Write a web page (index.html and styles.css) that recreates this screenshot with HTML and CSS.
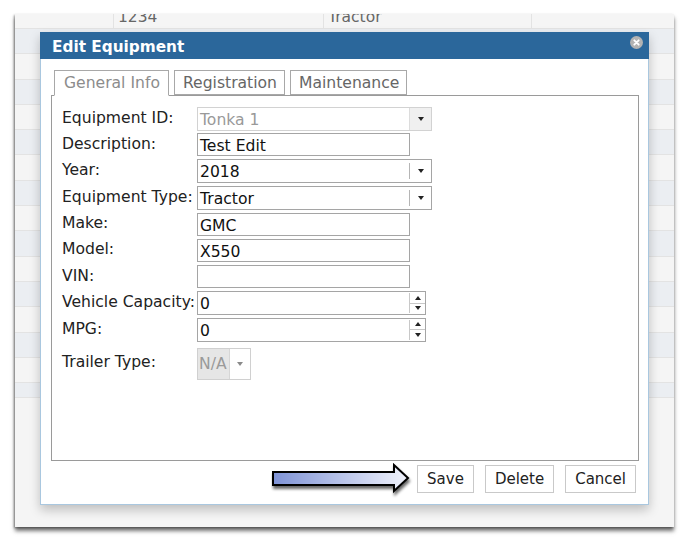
FILE: index.html
```html
<!DOCTYPE html>
<html>
<head>
<meta charset="utf-8">
<link rel="stylesheet" href="styles.css">
</head>
<body>
<div class="panel">
  <div class="grid-row first">
    <div class="cell c0"></div>
    <div class="cell c1">1234</div>
    <div class="cell c2">Tractor</div>
    <div class="cell c3"></div>
  </div>
  <div class="grid-row alt"></div>
  <div class="grid-row"></div>
  <div class="grid-row alt"></div>
  <div class="grid-row"></div>
  <div class="grid-row alt"></div>
  <div class="grid-row"></div>
  <div class="grid-row alt"></div>
  <div class="grid-row"></div>
  <div class="grid-row alt"></div>
  <div class="grid-row"></div>
  <div class="grid-row alt"></div>
  <div class="grid-row"></div>
  <div class="grid-row alt"></div>
  <div class="grid-row"></div>
  <div class="grid-row alt last"></div>
</div>

<div class="dialog">
  <div class="titlebar">
    <span class="title">Edit Equipment</span>
    <span class="close">
      <svg width="13" height="13" viewBox="0 0 13 13"><circle cx="6.5" cy="6.5" r="6.5" fill="#b3b3b3"/><path d="M4.3 4.3 L8.7 8.7 M8.7 4.3 L4.3 8.7" stroke="#fff" stroke-width="1.8" stroke-linecap="round"/></svg>
    </span>
  </div>
  <div class="dialog-body">
    <div class="tabs">
      <div class="tab active">General Info</div>
      <div class="tab">Registration</div>
      <div class="tab">Maintenance</div>
    </div>
    <div class="tab-content">
      <div class="row">
        <label class="lbl">Equipment ID:</label>
        <div class="select disabled"><span class="val">Tonka 1</span><span class="drop"><i class="caret"></i></span></div>
      </div>
      <div class="row">
        <label class="lbl">Description:</label>
        <div class="input"><span class="val">Test Edit</span></div>
      </div>
      <div class="row">
        <label class="lbl">Year:</label>
        <div class="select"><span class="val">2018</span><span class="drop"><i class="caret"></i></span></div>
      </div>
      <div class="row">
        <label class="lbl">Equipment Type:</label>
        <div class="select"><span class="val">Tractor</span><span class="drop"><i class="caret"></i></span></div>
      </div>
      <div class="row">
        <label class="lbl">Make:</label>
        <div class="input"><span class="val">GMC</span></div>
      </div>
      <div class="row">
        <label class="lbl">Model:</label>
        <div class="input"><span class="val">X550</span></div>
      </div>
      <div class="row">
        <label class="lbl">VIN:</label>
        <div class="input"><span class="val"></span></div>
      </div>
      <div class="row">
        <label class="lbl">Vehicle Capacity:</label>
        <div class="number"><span class="val">0</span><span class="spin"><i class="up"></i><i class="down"></i></span></div>
      </div>
      <div class="row">
        <label class="lbl">MPG:</label>
        <div class="number"><span class="val">0</span><span class="spin"><i class="up"></i><i class="down"></i></span></div>
      </div>
      <div class="row tall">
        <label class="lbl">Trailer Type:</label>
        <div class="mini-select"><span class="val">N/A</span><span class="drop"><i class="caret light"></i></span></div>
      </div>
    </div>
    <div class="buttons">
      <button class="btn">Save</button>
      <button class="btn">Delete</button>
      <button class="btn">Cancel</button>
    </div>
  </div>
</div>

<svg class="arrow" width="146" height="40" viewBox="0 0 146 40">
  <defs>
    <linearGradient id="ag" x1="0" y1="0" x2="1" y2="0">
      <stop offset="0" stop-color="#7f93d6"/>
      <stop offset="1" stop-color="#f0f2fb"/>
    </linearGradient>
    <filter id="sh" x="-10%" y="-30%" width="130%" height="180%">
      <feGaussianBlur in="SourceAlpha" stdDeviation="1.6"/>
      <feOffset dx="1" dy="3" result="b"/>
      <feComponentTransfer><feFuncA type="linear" slope="0.6"/></feComponentTransfer>
      <feMerge><feMergeNode/><feMergeNode in="SourceGraphic"/></feMerge>
    </filter>
  </defs>
  <path d="M2 9 H123 V2 L137 15 L123 28 V22 H2 Z" fill="url(#ag)" stroke="#000" stroke-width="2" stroke-linejoin="miter" filter="url(#sh)"/>
</svg>
</body>
</html>
```

FILE: styles.css
```css
html, body {
  margin: 0;
  padding: 0;
  background: #fff;
}
body {
  width: 686px;
  height: 542px;
  position: relative;
  overflow: hidden;
  font-family: "DejaVu Sans", Verdana, sans-serif;
}

.panel {
  margin: 14px 0 0 15px;
  width: 659px;
  height: 513px;
  background: #f5f5f5;
  box-shadow: 0 4px 4px rgba(0, 0, 0, 0.55), -1px 1px 2px rgba(0, 0, 0, 0.35);
  display: flex;
  flex-direction: column;
}
.grid-row {
  height: 25.3px;
  flex: none;
  box-sizing: border-box;
  border-bottom: 1px solid #e3e3e3;
  background: #f5f5f5;
}
.grid-row.alt {
  background: #ebeef2;
}
.grid-row.last {
  height: 15px;
}
.grid-row.first {
  height: 15px;
  display: flex;
  overflow: hidden;
}
.cell {
  box-sizing: border-box;
  border-right: 1px solid #e3e3e3;
  font-size: 15.5px;
  color: #666;
  line-height: 15px;
  padding-left: 4px;
  margin-top: -4px;
  height: 19px;
}
.c0 { width: 99px; }
.c1 { width: 210px; }
.c2 { width: 208px; }
.c3 { flex: 1; border-right: 0; }

.dialog {
  position: absolute;
  left: 40px;
  top: 32px;
  width: 609px;
  height: 473px;
  box-sizing: border-box;
  background: #fff;
  border: 1px solid #a9c7df;
  border-top: 0;
  box-shadow: 0 5px 10px rgba(0, 0, 0, 0.22);
  display: flex;
  flex-direction: column;
}
.titlebar {
  height: 27px;
  margin: 0 -1px;
  background: #2b679b;
  display: flex;
  align-items: center;
  justify-content: space-between;
  padding: 0 6px 0 12px;
  flex: none;
}
.title {
  color: #fff;
  font-weight: bold;
  font-size: 15.3px;
  margin-top: 3px;
}
.close {
  display: flex;
  align-self: flex-start;
  margin-top: 4px;
}

.dialog-body {
  padding: 11px 9px 0 10px;
  display: flex;
  flex-direction: column;
  flex: 1;
}
.tabs {
  display: flex;
  gap: 5px;
  padding-left: 3px;
  margin-bottom: -1px;
  position: relative;
  z-index: 1;
}
.tab {
  height: 25px;
  box-sizing: border-box;
  border: 1px solid #a8a8a8;
  background: #fff;
  font-size: 15.6px;
  color: #666;
  padding: 0 7px 0 8px;
  line-height: 25px;
}
.tab.active {
  color: #8c8c8c;
  height: 26px;
  border-bottom-color: #fff;
  padding: 0 8px 0 9px;
}
.tab-content {
  height: 366px;
  box-sizing: border-box;
  border: 1px solid #9a9a9a;
  padding: 11px 0 0 10px;
  display: flex;
  flex-direction: column;
  gap: 3.4px;
}
.row {
  display: flex;
  align-items: center;
  height: 23px;
}
.row.tall {
  height: 32px;
  margin-top: 3px;
}
.lbl {
  width: 135px;
  flex: none;
  font-size: 15.6px;
  color: #222;
  margin-top: -2px;
  white-space: nowrap;
}
.row.tall .lbl {
  margin-top: -4px;
}
.val {
  font-size: 15.6px;
  color: #111;
  padding-left: 2px;
  line-height: 21px;
  flex: 1;
  white-space: nowrap;
  margin-top: 2px;
}
.input {
  width: 213px;
  height: 23px;
  box-sizing: border-box;
  border: 1px solid #a5a5a5;
  display: flex;
}
.select {
  width: 235px;
  height: 24px;
  box-sizing: border-box;
  border: 1px solid #a5a5a5;
  display: flex;
  background: #fff;
}
.select .drop {
  width: 21px;
  flex: none;
  border-left: 1px solid #b5b5b5;
  margin: 3px 0;
  display: flex;
  align-items: center;
  justify-content: center;
}
.select.disabled {
  border-color: #d2d2d2;
}
.select.disabled .val {
  color: #999;
}
.select.disabled .drop {
  margin: 0;
  background: #f0f0f0;
  border-left-color: #dcdcdc;
}
.caret {
  width: 0;
  height: 0;
  border-left: 3.5px solid transparent;
  border-right: 3.5px solid transparent;
  border-top: 4px solid #222;
}
.caret.light {
  border-top-color: #8a8a8a;
}
.number {
  width: 229px;
  height: 24px;
  box-sizing: border-box;
  border: 1px solid #a5a5a5;
  display: flex;
}
.spin {
  width: 15px;
  flex: none;
  border-left: 1px solid #c8c8c8;
  display: flex;
  flex-direction: column;
  margin: 1px 0;
}
.spin i {
  flex: 1;
  display: flex;
  align-items: center;
  justify-content: center;
}
.spin .up {
  border-bottom: 1px solid #c8c8c8;
}
.spin .up::after {
  content: "";
  border-left: 3.5px solid transparent;
  border-right: 3.5px solid transparent;
  border-bottom: 4px solid #222;
}
.spin .down::after {
  content: "";
  border-left: 3.5px solid transparent;
  border-right: 3.5px solid transparent;
  border-top: 4px solid #222;
}
.mini-select {
  width: 54px;
  height: 32px;
  box-sizing: border-box;
  border: 1px solid #d0d0d0;
  display: flex;
}
.mini-select .val {
  flex: none;
  width: 31px;
  box-sizing: border-box;
  background: #e6e6e6;
  color: #9a9a9a;
  padding-left: 1px;
  line-height: 30px;
  margin-top: 0;
}
.mini-select .drop {
  flex: 1;
  border-left: 1px solid #d6d6d6;
  display: flex;
  align-items: center;
  justify-content: center;
}

.buttons {
  display: flex;
  justify-content: flex-end;
  gap: 11px;
  margin-top: 4px;
  padding-right: 3px;
}
.btn {
  height: 28px;
  box-sizing: border-box;
  border: 1px solid #c9c9c9;
  background: #fff;
  font-family: "DejaVu Sans", Verdana, sans-serif;
  font-size: 15px;
  color: #222;
  padding: 0 9px;
  margin: 0;
}

.arrow {
  position: absolute;
  left: 271px;
  top: 463px;
}
```
